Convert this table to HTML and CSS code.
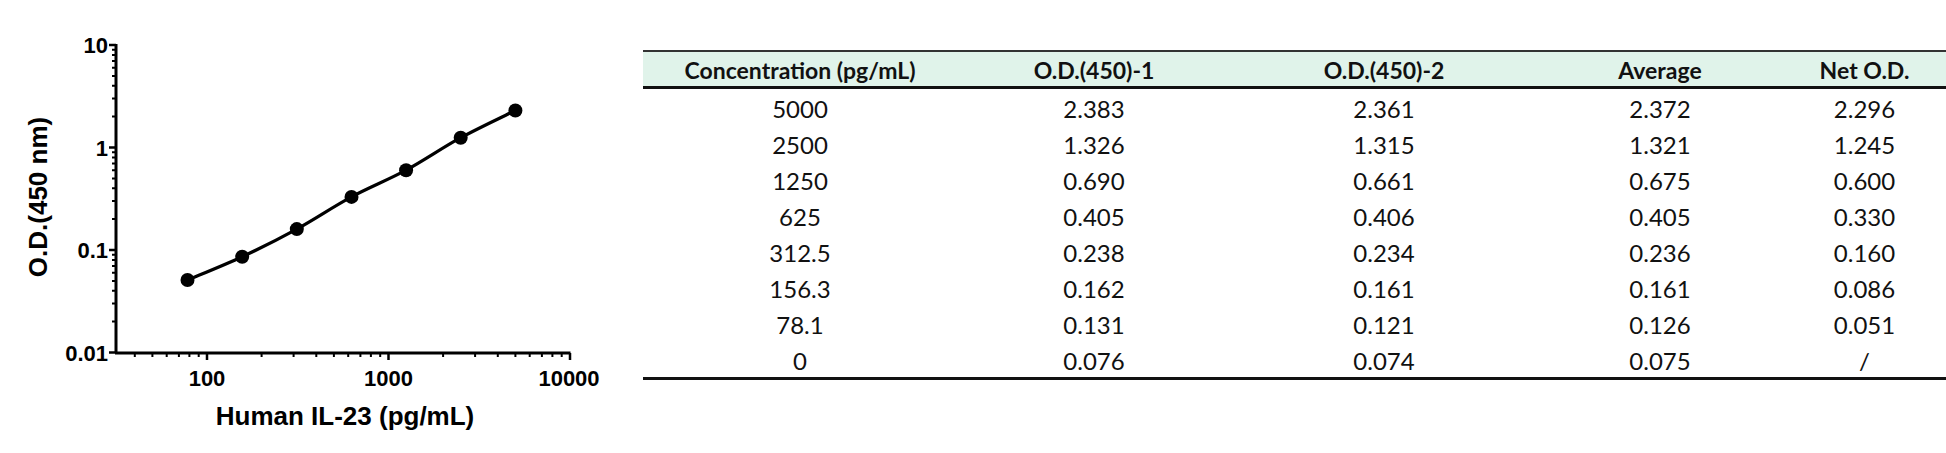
FILE: index.html
```html
<!DOCTYPE html>
<html lang="en">
<head>
<meta charset="utf-8">
<title>Human IL-23 standard curve</title>
<link rel="stylesheet" href="styles.css">
</head>
<body>
<div class="page">
  <figure class="chart">
    <svg class="chart-svg" width="643" height="453" viewBox="0 0 643 453" xmlns="http://www.w3.org/2000/svg">
      <!-- minor ticks -->
      <path class="tick-minor" d="M112 321.6H116M112 303.6H116M112 290.8H116M112 280.9H116M112 272.7H116M112 265.9H116M112 259.9H116M112 254.7H116
        M112 219.1H116M112 201.1H116M112 188.3H116M112 178.4H116M112 170.2H116M112 163.4H116M112 157.4H116M112 152.2H116
        M112 116.6H116M112 98.6H116M112 85.8H116M112 75.9H116M112 67.7H116M112 60.9H116M112 54.9H116M112 49.7H116
        M134.8 353V357M152.4 353V357M166.7 353V357M178.9 353V357M189.4 353V357M198.7 353V357
        M261.6 353V357M293.6 353V357M316.3 353V357M333.9 353V357M348.2 353V357M360.4 353V357M370.9 353V357M380.2 353V357
        M443.1 353V357M475.1 353V357M497.8 353V357M515.4 353V357M529.7 353V357M541.9 353V357M552.4 353V357M561.7 353V357"/>
      <!-- major ticks -->
      <path class="tick-major" d="M109 45H116M109 147.5H116M109 250H116M109 352.5H116M207 353V360M388.5 353V360M570 353V360"/>
      <!-- axes -->
      <path class="axis" d="M116 44V353M115 353H570.5"/>
      <!-- tick labels -->
      <text class="tick-label" x="108" y="53" text-anchor="end">10</text>
      <text class="tick-label" x="108" y="155.5" text-anchor="end">1</text>
      <text class="tick-label" x="108" y="258" text-anchor="end">0.1</text>
      <text class="tick-label" x="108" y="360.5" text-anchor="end">0.01</text>
      <text class="tick-label" x="207" y="386" text-anchor="middle">100</text>
      <text class="tick-label" x="388.5" y="386" text-anchor="middle">1000</text>
      <text class="tick-label" x="569" y="386" text-anchor="middle">10000</text>
      <!-- axis titles -->
      <text class="axis-title" x="345" y="425" text-anchor="middle">Human IL-23 (pg/mL)</text>
      <text class="axis-title" transform="translate(47 197) rotate(-90)" text-anchor="middle">O.D.(450 nm)</text>
      <!-- fitted curve -->
      <path class="curve" d="M187.5 280C196.6 276.1 224 265.2 242.2 256.7C260.4 248.2 278.6 239.1 296.8 229.1C315 219.1 333.3 206.7 351.5 196.9C369.7 187.1 387.9 180.1 406.1 170.2C424.3 160.3 442.5 147.7 460.7 137.7C478.9 127.8 506.3 115 515.4 110.5"/>
      <!-- data points -->
      <circle class="dot" cx="187.5" cy="280" r="7"/>
      <circle class="dot" cx="242.2" cy="256.7" r="7"/>
      <circle class="dot" cx="296.8" cy="229.1" r="7"/>
      <circle class="dot" cx="351.5" cy="196.9" r="7"/>
      <circle class="dot" cx="406.1" cy="170.2" r="7"/>
      <circle class="dot" cx="460.7" cy="137.7" r="7"/>
      <circle class="dot" cx="515.4" cy="110.5" r="7"/>
    </svg>
  </figure>

  <div class="table-wrap">
    <table class="data-table">
      <colgroup>
        <col class="c1"><col class="c2"><col class="c3"><col class="c4"><col class="c5">
      </colgroup>
      <thead>
        <tr>
          <th>Concentration (pg/mL)</th>
          <th>O.D.(450)-1</th>
          <th>O.D.(450)-2</th>
          <th>Average</th>
          <th>Net O.D.</th>
        </tr>
      </thead>
      <tbody>
        <tr><td>5000</td><td>2.383</td><td>2.361</td><td>2.372</td><td>2.296</td></tr>
        <tr><td>2500</td><td>1.326</td><td>1.315</td><td>1.321</td><td>1.245</td></tr>
        <tr><td>1250</td><td>0.690</td><td>0.661</td><td>0.675</td><td>0.600</td></tr>
        <tr><td>625</td><td>0.405</td><td>0.406</td><td>0.405</td><td>0.330</td></tr>
        <tr><td>312.5</td><td>0.238</td><td>0.234</td><td>0.236</td><td>0.160</td></tr>
        <tr><td>156.3</td><td>0.162</td><td>0.161</td><td>0.161</td><td>0.086</td></tr>
        <tr><td>78.1</td><td>0.131</td><td>0.121</td><td>0.126</td><td>0.051</td></tr>
        <tr><td>0</td><td>0.076</td><td>0.074</td><td>0.075</td><td>/</td></tr>
      </tbody>
    </table>
  </div>
</div>
</body>
</html>
```

FILE: styles.css
```css
html, body {
  margin: 0;
  padding: 0;
  background: #ffffff;
}

.page {
  display: flex;
  align-items: flex-start;
  width: 1946px;
  height: 453px;
  overflow: hidden;
}

.chart {
  margin: 0;
  flex: 0 0 643px;
  height: 453px;
}

.chart-svg {
  display: block;
}

.axis {
  fill: none;
  stroke: #000;
  stroke-width: 3;
}

.tick-major {
  fill: none;
  stroke: #000;
  stroke-width: 2.5;
}

.tick-minor {
  fill: none;
  stroke: #000;
  stroke-width: 2;
}

.tick-label {
  font-family: "Liberation Sans", Arial, sans-serif;
  font-weight: bold;
  font-size: 22px;
  fill: #000;
}

.axis-title {
  font-family: "Liberation Sans", Arial, sans-serif;
  font-weight: bold;
  font-size: 26px;
  fill: #000;
}

.curve {
  fill: none;
  stroke: #000;
  stroke-width: 3.2;
}

.dot {
  fill: #000;
}

.table-wrap {
  flex: 1 1 auto;
  padding-top: 50px;
}

.data-table {
  width: 1303px;
  border-collapse: collapse;
  table-layout: fixed;
  font-family: Lato, "Open Sans", sans-serif;
  color: #111;
  border-top: 2px solid #333;
  border-bottom: 3px solid #111;
}

.c1 { width: 314px; }
.c2 { width: 274px; }
.c3 { width: 306px; }
.c4 { width: 246px; }
.c5 { width: 163px; }

.data-table thead th {
  height: 34px;
  padding: 2px 0 0;
  box-sizing: border-box;
  background: #e0f3ea;
  font-weight: 700;
  font-size: 23px;
  line-height: 32px;
  text-align: center;
  border-bottom: 3px solid #111;
}

.data-table tbody td {
  height: 36px;
  padding: 3px 0 0;
  box-sizing: border-box;
  font-size: 24px;
  line-height: 33px;
  text-align: center;
  white-space: nowrap;
}
```
